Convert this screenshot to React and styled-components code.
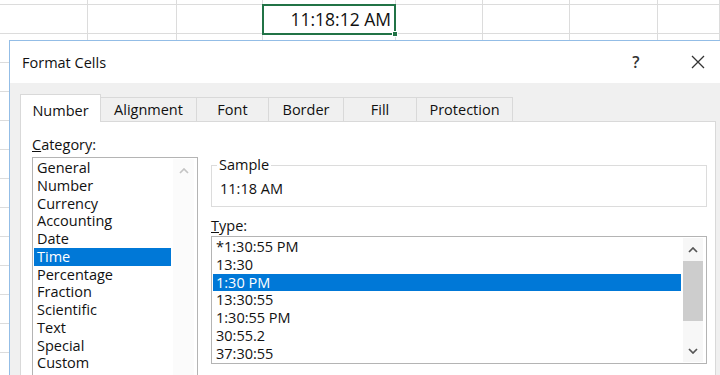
import React from "react";
import styled, { createGlobalStyle } from "styled-components";

const GlobalStyle = createGlobalStyle`
  html, body {
    margin: 0;
    padding: 0;
  }
  body {
    background: #fff;
    overflow: hidden;
    font-family: "Open Sans", "Noto Sans", sans-serif;
    color: #111;
  }
  * {
    box-sizing: border-box;
  }
`;

const Page = styled.div`
  position: relative;
  width: 720px;
  height: 375px;
  overflow: hidden;
  background: #fff;
`;

// spreadsheet behind the dialog
const Sheet = styled.div`
  display: grid;
  grid-template-columns: 88px 89px 86px 133px 87px 87px 88px 1fr;
  grid-auto-rows: 29px;
  margin-top: -24px;
`;

const Cell = styled.div`
  border-right: 1px solid #dcdcdc;
  border-bottom: 1px solid #dcdcdc;
`;

const ActiveCell = styled.div`
  position: relative;
  margin: -1px 0 -1px -1px;
  border: 2px solid #217346;
  padding-right: 3px;
  text-align: right;
  font-size: 17.5px;
  line-height: 27px;
  color: #111;
`;

const FillHandle = styled.span`
  position: absolute;
  right: -4px;
  bottom: -4px;
  width: 6px;
  height: 6px;
  background: #217346;
  border: 1px solid #fff;
`;

// dialog
const Dialog = styled.div`
  position: absolute;
  left: 9px;
  top: 40px;
  width: 711px;
  height: 360px;
  display: flex;
  flex-direction: column;
  background: #f0f0f0;
  border-left: 1px solid #93bde6;
  border-top: 1px solid #93bde6;
`;

const TitleBar = styled.div`
  height: 42px;
  flex: none;
  display: flex;
  align-items: center;
  padding-left: 12px;
  background: #fff;
`;

const Title = styled.div`
  flex: 1;
  font-size: 14.5px;
  color: #111;
`;

const HelpButton = styled.div`
  width: 30px;
  margin-right: 24px;
  text-align: center;
  font-size: 16px;
  font-weight: 600;
  color: #333;
`;

const CloseButton = styled.div`
  width: 45px;
  display: flex;
  justify-content: center;
  align-items: center;
`;

const Body = styled.div`
  flex: 1;
  display: flex;
  flex-direction: column;
  padding: 11px 4px 0 10px;
`;

const TabStrip = styled.div`
  height: 27px;
  display: flex;
  align-items: flex-end;
`;

const Tab = styled.div`
  position: relative;
  width: ${(p) => p.$w}px;
  height: ${(p) => (p.$active ? 28 : 24)}px;
  margin-left: -1px;
  margin-bottom: ${(p) => (p.$active ? -1 : 0)}px;
  padding-top: ${(p) => (p.$active ? 3 : 0)}px;
  display: flex;
  align-items: center;
  justify-content: center;
  background: ${(p) => (p.$active ? "#fff" : "#f0f0f0")};
  border: 1px solid #d9d9d9;
  border-bottom: none;
  z-index: ${(p) => (p.$active ? 1 : 0)};
  font-size: 14.5px;
  color: #111;

  &:first-child {
    margin-left: 0;
  }
`;

const Panel = styled.div`
  flex: 1;
  display: flex;
  gap: 13px;
  padding: 14px 8px 0 11px;
  background: #fff;
  border: 1px solid #d9d9d9;
`;

const LeftCol = styled.div`
  width: 166px;
  flex: none;
  display: flex;
  flex-direction: column;
`;

const RightCol = styled.div`
  flex: 1;
  display: flex;
  flex-direction: column;
`;

const Label = styled.div`
  font-size: 14.5px;
  line-height: 18px;
  margin-top: ${(p) => p.$mt || 0}px;
  color: #111;
`;

const ListBox = styled.div`
  height: ${(p) => p.$h}px;
  margin-top: ${(p) => p.$mt}px;
  flex: none;
  display: flex;
  border: 1px solid #b4b4b4;
  overflow: hidden;
  background: #fff;
`;

const Items = styled.div`
  flex: 1;
  display: flex;
  flex-direction: column;
  padding: 1px 2px 0 1px;
`;

const Item = styled.div`
  height: 17.75px;
  line-height: 17.75px;
  padding-left: 3px;
  font-size: 14.5px;
  white-space: nowrap;
  color: ${(p) => (p.$selected ? "#fff" : "#111")};
  background: ${(p) => (p.$selected ? "#0078d7" : "transparent")};
`;

const ScrollBar = styled.div`
  width: ${(p) => p.$w}px;
  flex: none;
  margin: 1px 3px 1px 0;
  display: flex;
  flex-direction: column;
  background: ${(p) => (p.$faint ? "#fbfbfb" : "#f7f7f7")};
`;

const ScrollButton = styled.div`
  height: 23px;
  flex: none;
  display: flex;
  align-items: center;
  justify-content: center;
  margin-top: ${(p) => (p.$down ? "auto" : 0)};
`;

const Thumb = styled.div`
  height: 60px;
  flex: none;
  background: #cdcdcd;
`;

const SampleBox = styled.fieldset`
  margin: 20px 0 0;
  padding: 6px 8px 8px 8px;
  border: 1px solid #dcdcdc;
  min-width: 0;
`;

const Legend = styled.legend`
  margin-left: -3px;
  padding: 0 2px;
  font-size: 14.5px;
  line-height: 18px;
  color: #111;
`;

const SampleValue = styled.div`
  font-size: 14.5px;
  line-height: 18px;
  color: #111;
`;

const Chevron = ({ down, color }) => (
  <svg width="10" height="6" viewBox="0 0 10 6">
    <path
      d={down ? "M1 1 L5 5 L9 1" : "M1 5 L5 1 L9 5"}
      fill="none"
      stroke={color}
      strokeWidth="1.7"
    />
  </svg>
);

const CloseIcon = () => (
  <svg width="14" height="14" viewBox="0 0 14 14">
    <path d="M1 1 L13 13 M13 1 L1 13" stroke="#333" strokeWidth="1.3" fill="none" />
  </svg>
);

const tabs = [
  { name: "Number", w: 81 },
  { name: "Alignment", w: 97 },
  { name: "Font", w: 73 },
  { name: "Border", w: 76 },
  { name: "Fill", w: 74 },
  { name: "Protection", w: 97 }
];

const categories = [
  "General",
  "Number",
  "Currency",
  "Accounting",
  "Date",
  "Time",
  "Percentage",
  "Fraction",
  "Scientific",
  "Text",
  "Special",
  "Custom"
];

const types = ["*1:30:55 PM", "13:30", "1:30 PM", "13:30:55", "1:30:55 PM", "30:55.2", "37:30:55"];

const ROWS = 14;
const COLS = 8;

export default function App() {
  const cells = [];
  for (let r = 0; r < ROWS; r++) {
    for (let c = 0; c < COLS; c++) {
      if (r === 1 && c === 3) {
        cells.push(
          <ActiveCell key={`${r}-${c}`}>
            11:18:12 AM
            <FillHandle />
          </ActiveCell>
        );
      } else {
        cells.push(<Cell key={`${r}-${c}`} />);
      }
    }
  }

  return (
    <Page>
      <GlobalStyle />
      <Sheet>{cells}</Sheet>

      <Dialog>
        <TitleBar>
          <Title>Format Cells</Title>
          <HelpButton>?</HelpButton>
          <CloseButton>
            <CloseIcon />
          </CloseButton>
        </TitleBar>

        <Body>
          <TabStrip>
            {tabs.map((t, i) => (
              <Tab key={t.name} $w={t.w} $active={i === 0}>
                {t.name}
              </Tab>
            ))}
          </TabStrip>

          <Panel>
            <LeftCol>
              <Label>
                <u>C</u>ategory:
              </Label>
              <ListBox $h={224} $mt={3}>
                <Items>
                  {categories.map((c) => (
                    <Item key={c} $selected={c === "Time"}>
                      {c}
                    </Item>
                  ))}
                </Items>
                <ScrollBar $w={21} $faint>
                  <ScrollButton>
                    <Chevron color="#c4c4c4" />
                  </ScrollButton>
                </ScrollBar>
              </ListBox>
            </LeftCol>

            <RightCol>
              <SampleBox>
                <Legend>Sample</Legend>
                <SampleValue>11:18 AM</SampleValue>
              </SampleBox>
              <Label $mt={10}>
                <u>T</u>ype:
              </Label>
              <ListBox $h={128} $mt={1}>
                <Items>
                  {types.map((t) => (
                    <Item key={t} $selected={t === "1:30 PM"}>
                      {t}
                    </Item>
                  ))}
                </Items>
                <ScrollBar $w={20}>
                  <ScrollButton>
                    <Chevron color="#555" />
                  </ScrollButton>
                  <Thumb />
                  <ScrollButton $down>
                    <Chevron down color="#555" />
                  </ScrollButton>
                </ScrollBar>
              </ListBox>
            </RightCol>
          </Panel>
        </Body>
      </Dialog>
    </Page>
  );
}
